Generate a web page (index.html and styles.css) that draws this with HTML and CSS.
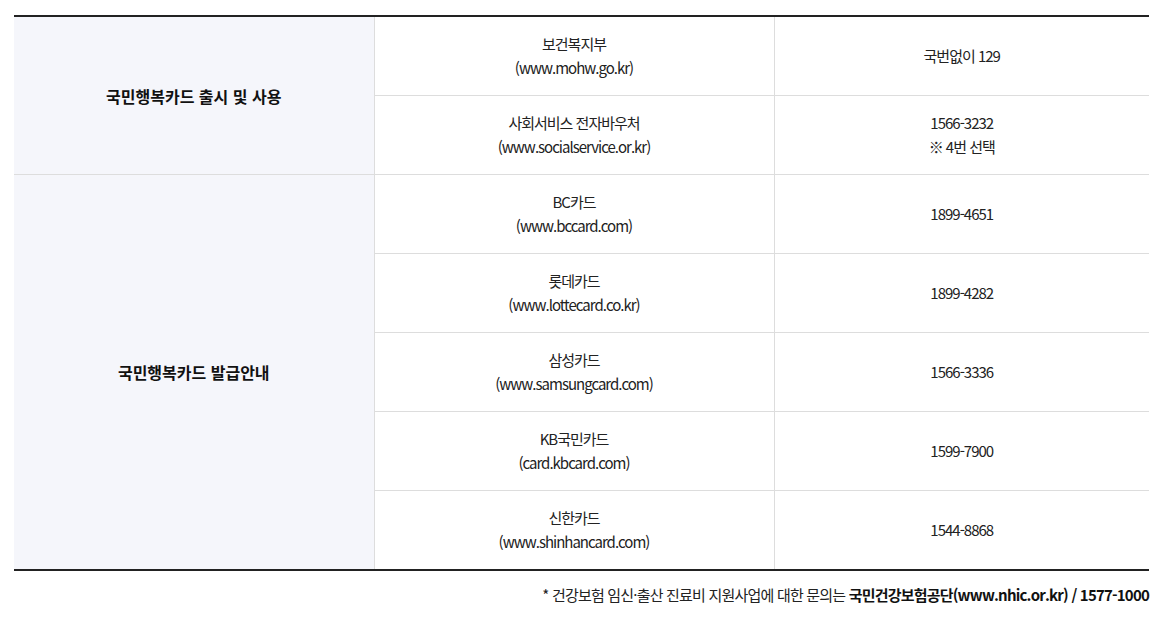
FILE: index.html
```html
<!DOCTYPE html>
<html lang="ko">
<head>
<meta charset="utf-8">
<link rel="stylesheet" href="styles.css">
</head>
<body>
<div class="wrap">
  <table class="tbl">
    <colgroup><col class="c1"><col class="c2"><col class="c3"></colgroup>
    <tbody>
      <tr>
        <th rowspan="2">국민행복카드 출시 및 사용</th>
        <td>보건복지부<br>(www.mohw.go.kr)</td>
        <td class="last">국번없이 129</td>
      </tr>
      <tr>
        <td>사회서비스 전자바우처<br>(www.socialservice.or.kr)</td>
        <td class="last">1566-3232<br>※ 4번 선택</td>
      </tr>
      <tr>
        <th rowspan="5">국민행복카드 발급안내</th>
        <td>BC카드<br>(www.bccard.com)</td>
        <td class="last">1899-4651</td>
      </tr>
      <tr>
        <td>롯데카드<br>(www.lottecard.co.kr)</td>
        <td class="last">1899-4282</td>
      </tr>
      <tr>
        <td>삼성카드<br>(www.samsungcard.com)</td>
        <td class="last">1566-3336</td>
      </tr>
      <tr>
        <td>KB국민카드<br>(card.kbcard.com)</td>
        <td class="last">1599-7900</td>
      </tr>
      <tr>
        <td>신한카드<br>(www.shinhancard.com)</td>
        <td class="last">1544-8868</td>
      </tr>
    </tbody>
  </table>
  <p class="note">* 건강보험 임신·출산 진료비 지원사업에 대한 문의는 <strong>국민건강보험공단(www.nhic.or.kr) / 1577-1000</strong></p>
</div>
</body>
</html>
```

FILE: styles.css
```css
html, body {
  margin: 0;
  padding: 0;
  background: #fff;
}
body {
  font-family: "Noto Sans CJK KR", "Noto Sans", sans-serif;
  color: #222;
}
.wrap {
  padding: 15px 19px 0 14px;
}
.tbl {
  width: 100%;
  border-collapse: collapse;
  table-layout: fixed;
  border-top: 2px solid #222;
  border-bottom: 2px solid #222;
}
.c1 { width: 360px; }
.c2 { width: 400px; }
.tbl th, .tbl td {
  height: 78px;
  padding: 0;
  text-align: center;
  vertical-align: middle;
  font-size: 15px;
  line-height: 24px;
  letter-spacing: -1px;
  border-bottom: 1px solid #ddd;
  border-right: 1px solid #ddd;
}
.tbl th {
  background: #f5f6fb;
  font-weight: 700;
  font-size: 16px;
  color: #111;
  letter-spacing: 0;
}
.tbl td { font-weight: 400; }
.tbl td.last { border-right: 0; }
.note {
  margin: 13px 0 0;
  text-align: right;
  font-size: 15px;
  letter-spacing: -0.8px;
  color: #222;
}
.note strong { font-weight: 700; color: #111; }
```
